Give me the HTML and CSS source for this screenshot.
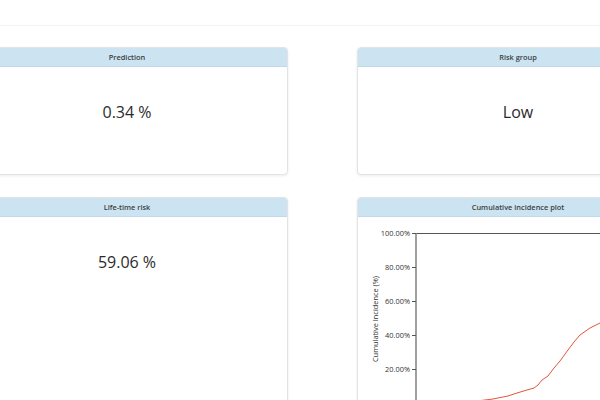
FILE: index.html
```html
<!DOCTYPE html>
<html lang="en">
<head>
    <meta charset="UTF-8">
    <meta name="viewport" content="width=device-width, initial-scale=1.0">
    <title>Risk results</title>
    <link rel="stylesheet" href="styles.css">
</head>
<body>

    <div class="topbar"></div>

    <div class="results">
        <div class="card">
            <div class="card-header">Prediction</div>
            <div class="card-body">
                <div class="value">0.34 %</div>
            </div>
        </div>

        <div class="card">
            <div class="card-header">Risk group</div>
            <div class="card-body">
                <div class="value">Low</div>
            </div>
        </div>

        <div class="card">
            <div class="card-header">Life-time risk</div>
            <div class="card-body tall">
                <div class="value">59.06 %</div>
            </div>
        </div>

        <!-- 累積發生率圖 -->
        <div class="card">
            <div class="card-header">Cumulative incidence plot</div>
            <div class="card-body tall plot">
                <svg class="chart" width="320" height="200" viewBox="0 0 320 200">
                    <line class="frame" x1="58" y1="16.5" x2="320" y2="16.5" />
                    <line class="axis" x1="58" y1="16" x2="58" y2="200" />

                    <line class="tick" x1="54" y1="16.5" x2="58" y2="16.5" />
                    <line class="tick" x1="54" y1="50.5" x2="58" y2="50.5" />
                    <line class="tick" x1="54" y1="84.5" x2="58" y2="84.5" />
                    <line class="tick" x1="54" y1="118.5" x2="58" y2="118.5" />
                    <line class="tick" x1="54" y1="152.5" x2="58" y2="152.5" />

                    <text class="tick-label" x="52" y="19">100.00%</text>
                    <text class="tick-label" x="52" y="53">80.00%</text>
                    <text class="tick-label" x="52" y="87">60.00%</text>
                    <text class="tick-label" x="52" y="121">40.00%</text>
                    <text class="tick-label" x="52" y="155">20.00%</text>

                    <text class="axis-label" transform="translate(19.5 102) rotate(-90)">Cumulative Incidence (%)</text>

                    <polyline class="curve" points="80,185.5 100,185 119,184 135,182 150,179 159,176 169,173 176,171 180,168 184,163 190,159 196,151 202,144 210,133 216,125 222,118 232,111 242,106 260,96 280,86 300,78 320,70" />
                </svg>
            </div>
        </div>
    </div>

</body>
</html>
```

FILE: styles.css
```css
/* 基本頁面設置 */
body {
    margin: 0;
    padding: 0;
    background-color: #fff;
    color: #333;
    font-family: 'Open Sans', 'Noto Sans', sans-serif;
    overflow: hidden;
}

.topbar {
    height: 25px;
    border-bottom: 1px solid #f2f2f2;
}

/* 結果卡片 */
.results {
    display: grid;
    grid-template-columns: 322px 322px;
    column-gap: 69px;
    row-gap: 22px;
    margin-top: 21px;
    margin-left: -34px;
    width: 713px;
}

.card {
    background-color: #fff;
    border: 1px solid #e3e3e3;
    border-radius: 4px;
    box-shadow: 0 1px 3px rgba(0, 0, 0, 0.08);
    overflow: hidden;
}

.card-header {
    height: 18px;
    line-height: 18px;
    background-color: #cce3f2;
    border-bottom: 1px solid #c0d9ea;
    text-align: center;
    font-size: 7.4px;
    font-weight: 600;
    color: #3a3f44;
}

.card-body {
    height: 107px;
    text-align: center;
}

.card-body.tall {
    height: 220px;
}

.value {
    padding-top: 34px;
    font-size: 16px;
    line-height: 22px;
    color: #2b2b2b;
}

/* 圖表 */
.plot {
    text-align: left;
}

.chart {
    display: block;
}

.frame {
    stroke: #555;
    stroke-width: 1;
}

.axis {
    stroke: #888;
    stroke-width: 1.6;
}

.tick {
    stroke: #555;
    stroke-width: 1;
}

.tick-label {
    font-size: 7.4px;
    fill: #333;
    text-anchor: end;
}

.axis-label {
    font-size: 7.4px;
    fill: #333;
    text-anchor: middle;
}

.curve {
    fill: none;
    stroke: #e2553b;
    stroke-width: 1;
}
```
